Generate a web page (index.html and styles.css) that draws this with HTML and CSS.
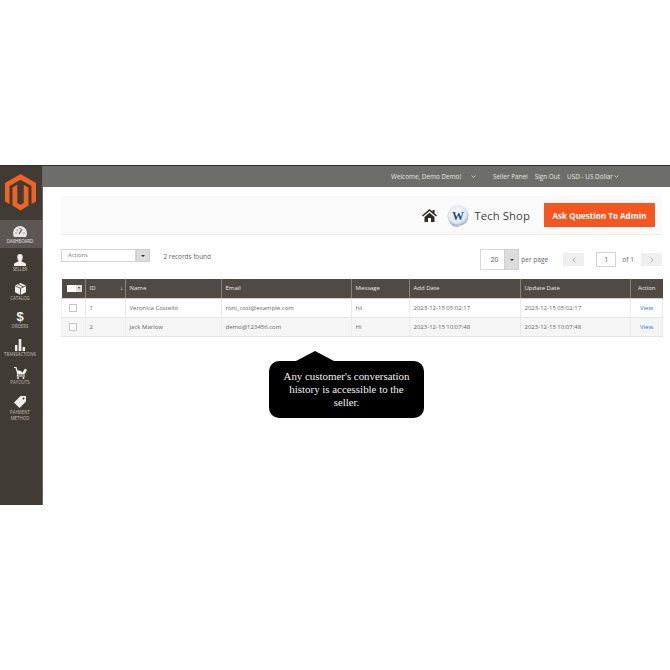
FILE: index.html
```html
<!DOCTYPE html>
<html lang="en">
<head>
<meta charset="utf-8">
<title>Seller Panel</title>
<link rel="stylesheet" href="styles.css">
</head>
<body>
<div class="app">
  <aside class="sidebar">
    <div class="logo">
      <svg width="31" height="37" viewBox="0 0 31 37"><path fill="#f26322" d="M15.500 0 31 9V27.500L26.500 30V12L15.500 5.800 4.500 12V30L0 27.500V9Z"/><path fill="#f26322" d="M7.500 13.500 12.300 10.800V29L15.500 30.800 18.700 29V10.800L23.500 13.500V31.500L15.500 36.500 7.500 31.500Z"/></svg>
    </div>
    <a class="nav-item active">
      <svg width="14" height="11" viewBox="0 0 14 11"><path fill="#e8e6e3" d="M7 0a7 7 0 0 1 7 7c0 1.500-.4 2.800-1 4H1C.4 9.800 0 8.500 0 7a7 7 0 0 1 7-7Z"/><path stroke="#555" stroke-width="1.200" d="M6 8 9 3M2.500 7h1M10.500 7h1M7 2v1M3.800 3.800l.7.7"/></svg>
      <span>DASHBOARD</span>
    </a>
    <a class="nav-item">
      <svg width="12" height="12" viewBox="0 0 12 12"><path fill="#f0eeeb" d="M6 0c1.800 0 2.800 1.300 2.800 3S7.800 6.600 7.500 7.200c0 .8 4.500 1.300 4.500 3V12H0v-1.800c0-1.700 4.500-2.200 4.500-3C4.200 6.600 3.200 4.700 3.200 3S4.200 0 6 0Z"/></svg>
      <span>SELLER</span>
    </a>
    <a class="nav-item">
      <svg width="11" height="12" viewBox="0 0 11 12"><path fill="#f0eeeb" d="M5.500 0 11 2.500v6.800L5.500 12 0 9.300V2.500Z"/><path stroke="#413b36" stroke-width=".8" fill="none" d="M0 2.700 5.500 5.300 11 2.700M5.500 5.300V12M3 1.200l5.500 2.700"/></svg>
      <span>CATALOG</span>
    </a>
    <a class="nav-item">
      <span class="glyph">$</span>
      <span>ORDERS</span>
    </a>
    <a class="nav-item">
      <svg width="10" height="12" viewBox="0 0 10 12"><path fill="#f0eeeb" d="M0 6h2.400v6H0ZM3.700 0h2.600v12H3.700ZM7.600 8H10v4H7.600Z"/></svg>
      <span>TRANSACTIONS</span>
    </a>
    <a class="nav-item">
      <svg width="13" height="12" viewBox="0 0 13 12"><path fill="#f0eeeb" d="M0 0h2.500l1 3.500H6L8.500 5.500 11 1.500 13 3 10.500 7.500H4.200L3.800 8.500H11V9.500H2.500L3.200 7 1.500 1H0Z"/><circle fill="#f0eeeb" cx="4" cy="11" r="1"/><circle fill="#f0eeeb" cx="9.500" cy="11" r="1"/></svg>
      <span>PAYOUTS</span>
    </a>
    <a class="nav-item">
      <svg width="12" height="12" viewBox="0 0 12 12"><path fill="#f0eeeb" fill-rule="evenodd" d="M6.500 0H12V5.500L5.500 12 0 6.500ZM9.500 1.500a1 1 0 1 0 .01 0Z"/></svg>
      <span class="two-line">PAYMENT<br>METHOD</span>
    </a>
  </aside>
  <div class="main">
    <header class="topbar">
      <span class="welcome">Welcome, Demo Demo!</span>
      <svg class="chev first" width="5" height="3" viewBox="0 0 5 3"><path d="M.5.500 2.500 2.500 4.500.500" fill="none" stroke="#e8e8e8" stroke-width=".7"/></svg>
      <span class="link panel">Seller Panel</span>
      <span class="link">Sign Out</span>
      <span class="link last">USD - US Dollar</span>
      <svg class="chev" width="5" height="3" viewBox="0 0 5 3"><path d="M.5.500 2.500 2.500 4.500.500" fill="none" stroke="#e8e8e8" stroke-width=".7"/></svg>
    </header>
    <div class="content">
      <section class="shop-head">
        <svg class="home" width="15" height="13" viewBox="0 0 15 13"><path fill="#2f2b29" d="M7.500 0 10.500 2.600V1H12.500V4.300L15 6.500 14 7.500 7.500 2 1 7.500 0 6.500ZM2.500 8 7.500 3.700 12.500 8V13H9V9H6V13H2.500Z"/></svg>
        <svg class="shop-logo" width="22" height="23" viewBox="0 0 22 23"><defs><radialGradient id="g" cx=".45" cy=".4" r=".65"><stop offset="0" stop-color="#fff"/><stop offset=".7" stop-color="#dfe6ef"/><stop offset="1" stop-color="#8296ad"/></radialGradient></defs><circle cx="11" cy="11.500" r="10.500" fill="url(#g)"/><path d="M1.500 8A10.500 10.500 0 0 0 13 22 9 11 0 0 1 1.500 8Z" fill="#7b8ea5"/><text x="11" y="15.500" class="w-mark">W</text></svg>
        <span class="shop-name">Tech Shop</span>
        <button class="ask">Ask Question To Admin</button>
      </section>
      <section class="toolbar">
        <div class="actions">
          <div class="select wide"><span>Actions</span></div>
          <div class="select-btn small"><i></i></div>
          <span class="records">2 records found</span>
        </div>
        <div class="pager">
          <div class="perpage"><span>20</span></div>
          <div class="select-btn tall"><i></i></div>
          <span class="pp-label">per page</span>
          <div class="nav-btn"><svg width="4" height="6" viewBox="0 0 4 6"><path d="M3.500.500 1 3 3.500 5.500" fill="none" stroke="#a5a5a5" stroke-width=".8"/></svg></div>
          <div class="page-box">1</div>
          <span class="of">of 1</span>
          <div class="nav-btn"><svg width="4" height="6" viewBox="0 0 4 6"><path d="M.5.500 3 3 .5 5.500" fill="none" stroke="#a5a5a5" stroke-width=".8"/></svg></div>
        </div>
      </section>
      <table class="grid">
        <colgroup>
          <col class="c1"><col class="c2"><col class="c3"><col class="c4"><col class="c5"><col class="c6"><col class="c7"><col class="c8">
        </colgroup>
        <thead>
          <tr>
            <th><span class="head-check"><b></b><i></i></span></th>
            <th><span class="id-head"><span>ID</span><span>↓</span></span></th>
            <th>Name</th>
            <th>Email</th>
            <th>Message</th>
            <th>Add Date</th>
            <th>Update Date</th>
            <th class="center">Action</th>
          </tr>
        </thead>
        <tbody>
          <tr>
            <td class="center"><span class="check"></span></td>
            <td>1</td>
            <td>Veronica Costello</td>
            <td>roni_cost@example.com</td>
            <td>hii</td>
            <td>2023-12-15 05:02:17</td>
            <td>2023-12-15 05:02:17</td>
            <td class="center"><a class="view">View</a></td>
          </tr>
          <tr class="alt">
            <td class="center"><span class="check"></span></td>
            <td>2</td>
            <td>Jack Marlow</td>
            <td>demo@123456.com</td>
            <td>Hi</td>
            <td>2023-12-15 10:07:48</td>
            <td>2023-12-15 10:07:48</td>
            <td class="center"><a class="view">View</a></td>
          </tr>
        </tbody>
      </table>
      <div class="callout">Any customer's conversation history is accessible to the seller.</div>
    </div>
  </div>
</div>
</body>
</html>
```
FILE: styles.css
```css
* { box-sizing: border-box; }
html, body { margin: 0; padding: 0; background: #fff; }
body { font-family: "Open Sans", sans-serif; color: #555; padding-top: 165px; height: 670px; overflow: hidden; }

.app { display: flex; height: 340px; border-top: 1px solid #2e2b29; }

.sidebar { width: 43px; background: #413b36; flex: none; display: flex; flex-direction: column; border-right: 1px solid #6b6966; }
.logo { height: 54px; display: flex; align-items: flex-start; justify-content: center; padding: 8px 2px 0 0; }
.nav-item { display: flex; flex-direction: column; align-items: center; color: #c4bfba; font-size: 4.400px; line-height: 5.500px; text-align: center; height: 28.300px; padding: 6px 2px 0 0; gap: 1px; }
.nav-item svg { flex: none; }
.nav-item.active { background: #5c5753; color: #e8e6e3; gap: 2px; }
.two-line { line-height: 6.500px; }
.glyph { font-family: "Liberation Sans", sans-serif; font-weight: 700; font-size: 13px; line-height: 12px; color: #f0eeeb; }

.main { flex: 1; display: flex; flex-direction: column; min-width: 0; }
.topbar { height: 21px; background: #6d6d6b; display: flex; align-items: center; color: #e6e6e4; font-size: 6.400px; padding-left: 348px; }
.welcome { width: 80px; }
.chev { flex: none; }
.chev.first { margin-right: 17px; }
.link { margin-right: 7px; }
.link.last { margin-right: 1.500px; }

.content { padding: 9px 8px 0 18px; }

.shop-head { height: 39px; background: #fafafa; border-bottom: 1px solid #ececec; display: flex; align-items: center; padding-right: 7px; }
.home { margin-left: auto; margin-right: 10px; }
.shop-logo { margin-right: 5px; }
.w-mark { font-family: "Liberation Serif", serif; font-weight: 700; font-size: 12px; fill: #1d4e96; text-anchor: middle; }
.shop-name { font-size: 11.300px; color: #444; margin-right: 14px; letter-spacing: .1px; }
.ask { height: 24px; width: 111px; padding: 0; border: 0; background: #f5561f; color: #fff; font-family: "Open Sans", sans-serif; font-weight: 700; font-size: 8.100px; }

.toolbar { display: flex; justify-content: space-between; align-items: flex-start; margin-top: 14px; height: 30px; }
.actions, .pager { display: flex; align-items: flex-start; }
.select { width: 75px; height: 13px; background: #fff; border: 1px solid #d4d4d4; font-size: 5.800px; color: #777; line-height: 10px; padding-left: 6px; }
.select-btn { background: #dcdcdc; border: 1px solid #cfcfcf; display: flex; align-items: center; justify-content: center; }
.select-btn i { width: 0; height: 0; border: 2px solid transparent; border-top: 2.500px solid #333; border-bottom: 0; }
.select-btn.small { width: 14px; height: 13px; }
.select-btn.tall { width: 15px; height: 21px; }
.records { font-size: 6.400px; margin-left: 13.500px; line-height: 15px; color: #666; }
.perpage { width: 24px; height: 21px; border: 1px solid #d9d9d9; border-right: 0; font-size: 6.600px; line-height: 19px; text-align: right; padding-right: 6px; color: #555; }
.pp-label { font-size: 6.600px; line-height: 21px; margin-left: 2px; margin-right: 15px; color: #666; }
.nav-btn { width: 21px; height: 13px; margin-top: 4px; background: #efefef; display: flex; align-items: center; justify-content: center; }
.page-box { width: 20px; height: 15px; margin: 3px 0 0 12px; border: 1px solid #d4d4d4; font-size: 6.600px; line-height: 13px; text-align: center; color: #555; }
.of { font-size: 6.600px; line-height: 21px; margin: 0 7px 0 6px; color: #666; }

.grid { width: 601px; table-layout: fixed; border-collapse: collapse; font-size: 6px; }
.c1 { width: 24px; } .c2 { width: 40px; } .c3 { width: 96px; } .c4 { width: 130px; }
.c5 { width: 58px; } .c6 { width: 111px; } .c7 { width: 110px; } .c8 { width: 32px; }
.grid th { background: #514943; color: #f0ece8; font-weight: 400; text-align: left; height: 19px; padding: 0 0 0 3.500px; border-left: 1px solid #8a817a; border-bottom: 1px solid #d4d0cc; }
.grid th:first-child { border-left: 0; padding: 0 0 0 5px; }
.grid td { height: 19px; padding: 0 0 0 3.500px; border-left: 1px solid #ebebeb; border-bottom: 1px solid #e6e6e6; color: #666; background: #fff; }
.grid td:first-child { border-left: 1px solid #f0f0f0; padding: 0 2px 0 0; }
.grid td:last-child { border-right: 1px solid #ebebeb; }
.grid .alt td { background: #f5f5f5; }
.grid .center { text-align: center; padding: 0; }
.id-head { display: flex; justify-content: space-between; padding-right: 2px; }
.head-check { display: flex; width: 15px; height: 7px; }
.head-check b { width: 9px; background: #fff; }
.head-check i { width: 6px; background: #dcdcdc; display: flex; align-items: center; justify-content: center; }
.head-check i::after { content: ""; border: 1.500px solid transparent; border-top: 2px solid #333; border-bottom: 0; }
.check { display: block; width: 8px; height: 8px; margin: 0 auto; background: #fff; border: 1px solid #c6c6c6; }
.view { color: #1979c3; }

.callout { position: relative; width: 155px; height: 57px; margin: 24px 0 0 208px; padding: 9px 10px 0; background: #000; border-radius: 10px; color: #f2f2f2; font-family: "Liberation Serif", serif; font-size: 10.900px; line-height: 13px; text-align: center; }
.callout::before { content: ""; position: absolute; left: 27px; top: -10px; border-left: 19px solid transparent; border-right: 19px solid transparent; border-bottom: 10px solid #000; }
```
